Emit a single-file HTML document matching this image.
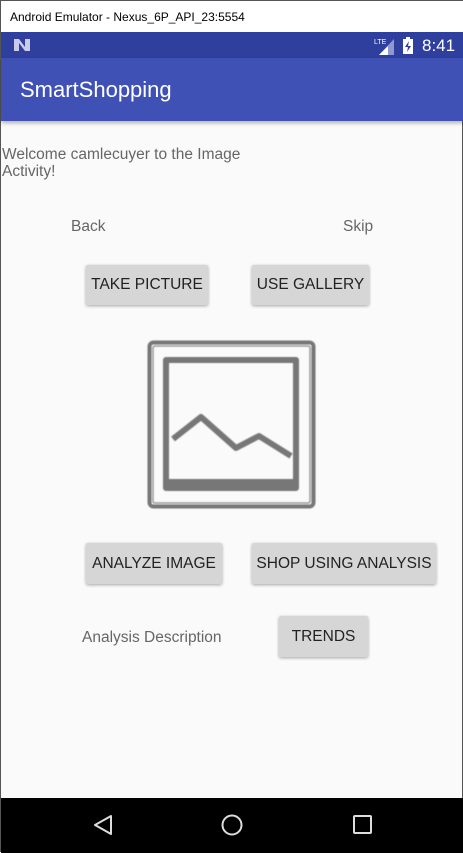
<!DOCTYPE html>
<html><head><style>
*{margin:0;padding:0;box-sizing:border-box}
body{width:463px;height:852px;position:relative;overflow:hidden;background:#fafafa;font-family:"Liberation Sans",sans-serif;border:1px solid #555}
.abs{position:absolute}
.title{left:0;top:0;width:463px;height:31px;background:#fff;font-size:12px;color:#000;padding:9px 0 0 9px}
.status{left:0;top:31px;width:463px;height:26px;background:#2f3f9e}
.appbar{left:0;top:57px;width:463px;height:63px;background:#3f51b5;box-shadow:0 2px 4px rgba(0,0,0,.3)}
.appbar span{position:absolute;left:19px;top:19px;color:#fff;font-size:22px}
.t{color:#666;font-size:15.5px}
.btn{background:#d6d6d6;box-shadow:0 1px 3px rgba(0,0,0,.35);border-radius:2px;color:#222;font-size:15.5px;display:flex;align-items:center;justify-content:center}
.nav{left:0;top:797px;width:463px;height:55px;background:#000}
</style></head><body>
<div class="abs title">Android Emulator - Nexus_6P_API_23:5554</div>
<div class="abs status">
<svg class="abs" style="left:12px;top:6px" width="18" height="14"><path d="M1 1h5l6 8V1h5v12h-5L6 5v8H1z" fill="#c8cce8"/></svg>
<svg class="abs" style="left:373px;top:5px" width="22" height="18"><text x="0" y="7" font-size="7" fill="#fff" font-family="Liberation Sans">LTE</text><path d="M20 2v16H5z" fill="#8f99d0"/><path d="M14 9v9H5z" fill="#fff"/></svg>
<svg class="abs" style="left:401px;top:5px" width="12" height="18"><rect x="1" y="2" width="10" height="15" fill="#fff"/><rect x="4" y="0" width="4" height="2" fill="#fff"/><path d="M7 4L3 10h3l-1 5 4-6H6z" fill="#2f3f9e"/></svg>
<div class="abs" style="left:421px;top:4px;color:#fff;font-size:17px">8:41</div>
</div>
<div class="abs appbar"><span>SmartShopping</span></div>
<div class="abs t" style="left:1px;top:145px;line-height:17px">Welcome camlecuyer to the Image<br>Activity!</div>
<div class="abs t" style="left:70px;top:217px">Back</div>
<div class="abs t" style="left:342px;top:217px">Skip</div>
<div class="abs btn" style="left:85px;top:264px;width:122px;height:40px">TAKE PICTURE</div>
<div class="abs btn" style="left:251px;top:264px;width:117px;height:40px">USE GALLERY</div>
<svg class="abs" style="left:140px;top:333px" width="182" height="182">
<g fill="none" stroke="#777" stroke-linejoin="round" style="filter:blur(0.6px)">
<rect x="8.5" y="8.5" width="164" height="164" rx="4" stroke-width="4"/>
<rect x="12" y="12" width="157" height="157" rx="2" stroke-width="1.5" stroke="#999"/>
<rect x="25" y="26" width="130" height="128" stroke-width="6"/>
<path d="M32 105L60 83L95 114L118 102L150 122" stroke-width="6"/>
<path d="M25 149H155" stroke-width="8"/>
</g></svg>
<div class="abs btn" style="left:85px;top:542px;width:136px;height:41px">ANALYZE IMAGE</div>
<div class="abs btn" style="left:251px;top:542px;width:184px;height:41px">SHOP USING ANALYSIS</div>
<div class="abs t" style="left:81px;top:628px">Analysis Description</div>
<div class="abs btn" style="left:278px;top:615px;width:89px;height:41px">TRENDS</div>
<div class="abs nav">
<svg class="abs" style="left:90px;top:15px" width="24" height="24"><path d="M20 3L4 12L20 21Z" fill="none" stroke="#ddd" stroke-width="2" stroke-linejoin="round"/></svg>
<svg class="abs" style="left:219px;top:15px" width="24" height="24"><circle cx="12" cy="12" r="9.5" fill="none" stroke="#ddd" stroke-width="2"/></svg>
<svg class="abs" style="left:350px;top:15px" width="24" height="24"><rect x="3" y="3" width="17" height="17" rx="1" fill="none" stroke="#ddd" stroke-width="2"/></svg>
</div>
</body></html>
